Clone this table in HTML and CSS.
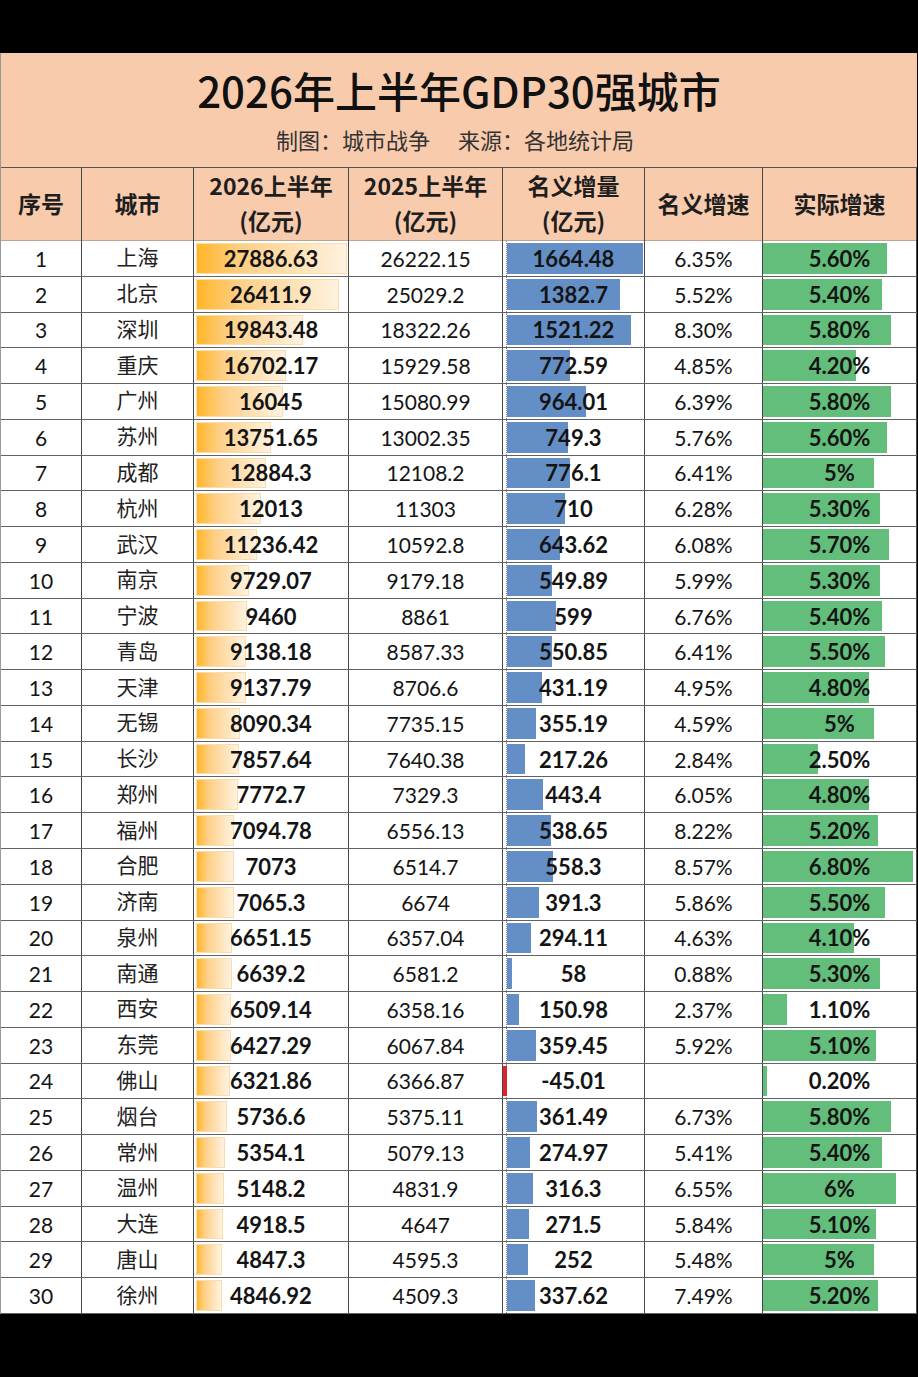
FILE: index.html
```html
<!DOCTYPE html>
<html lang="zh-CN">
<head>
<meta charset="utf-8">
<title>2026年上半年GDP30强城市</title>
<link rel="stylesheet" href="styles.css">
</head>
<body>
<div class="sheet">
  <div class="title-block">
    <div class="title">2026年上半年GDP30强城市</div>
    <div class="subtitle">制图：城市战争<span class="gap"></span>来源：各地统计局</div>
  </div>
  <div class="row head">
    <div class="cell">序号</div>
    <div class="cell">城市</div>
    <div class="cell two">2026上半年<br>(亿元)</div>
    <div class="cell two">2025上半年<br>(亿元)</div>
    <div class="cell two">名义增量<br>(亿元)</div>
    <div class="cell">名义增速</div>
    <div class="cell">实际增速</div>
  </div>
  <div id="rows"></div>
</div>
<script src="script.js"></script>
</body>
</html>
```
FILE: script.js
```js
var data = [
  ["上海","27886.63","26222.15","1664.48","6.35%","5.60%"],
  ["北京","26411.9","25029.2","1382.7","5.52%","5.40%"],
  ["深圳","19843.48","18322.26","1521.22","8.30%","5.80%"],
  ["重庆","16702.17","15929.58","772.59","4.85%","4.20%"],
  ["广州","16045","15080.99","964.01","6.39%","5.80%"],
  ["苏州","13751.65","13002.35","749.3","5.76%","5.60%"],
  ["成都","12884.3","12108.2","776.1","6.41%","5%"],
  ["杭州","12013","11303","710","6.28%","5.30%"],
  ["武汉","11236.42","10592.8","643.62","6.08%","5.70%"],
  ["南京","9729.07","9179.18","549.89","5.99%","5.30%"],
  ["宁波","9460","8861","599","6.76%","5.40%"],
  ["青岛","9138.18","8587.33","550.85","6.41%","5.50%"],
  ["天津","9137.79","8706.6","431.19","4.95%","4.80%"],
  ["无锡","8090.34","7735.15","355.19","4.59%","5%"],
  ["长沙","7857.64","7640.38","217.26","2.84%","2.50%"],
  ["郑州","7772.7","7329.3","443.4","6.05%","4.80%"],
  ["福州","7094.78","6556.13","538.65","8.22%","5.20%"],
  ["合肥","7073","6514.7","558.3","8.57%","6.80%"],
  ["济南","7065.3","6674","391.3","5.86%","5.50%"],
  ["泉州","6651.15","6357.04","294.11","4.63%","4.10%"],
  ["南通","6639.2","6581.2","58","0.88%","5.30%"],
  ["西安","6509.14","6358.16","150.98","2.37%","1.10%"],
  ["东莞","6427.29","6067.84","359.45","5.92%","5.10%"],
  ["佛山","6321.86","6366.87","-45.01","","0.20%"],
  ["烟台","5736.6","5375.11","361.49","6.73%","5.80%"],
  ["常州","5354.1","5079.13","274.97","5.41%","5.40%"],
  ["温州","5148.2","4831.9","316.3","6.55%","6%"],
  ["大连","4918.5","4647","271.5","5.84%","5.10%"],
  ["唐山","4847.3","4595.3","252","5.48%","5%"],
  ["徐州","4846.92","4509.3","337.62","7.49%","5.20%"]
];
var html = "";
for (var i = 0; i < data.length; i++) {
  var d = data[i];
  var gdp = parseFloat(d[1]);
  var inc = parseFloat(d[3]);
  var real = parseFloat(d[5]);
  var ow = (gdp * 151 / 27886.63).toFixed(1);
  var incBar;
  if (inc >= 0) {
    incBar = '<span class="bar blue" style="width:' + (inc * 136 / 1664.48).toFixed(1) + 'px"></span>';
  } else {
    var rw = (-inc * 136 / 1664.48).toFixed(1);
    incBar = '<span class="bar red" style="width:' + rw + 'px;left:' + (4 - rw) + 'px"></span>';
  }
  var gw = (real * 22.1).toFixed(1);
  html += '<div class="row data">' +
    '<div class="cell num">' + (i + 1) + '</div>' +
    '<div class="cell city">' + d[0] + '</div>' +
    '<div class="cell bold"><span class="bar orange" style="width:' + ow + 'px"></span><span class="val">' + d[1] + '</span></div>' +
    '<div class="cell num">' + d[2] + '</div>' +
    '<div class="cell bold inc"><span class="axis"></span>' + incBar + '<span class="val">' + d[3] + '</span></div>' +
    '<div class="cell num">' + d[4] + '</div>' +
    '<div class="cell bold"><span class="bar green" style="width:' + gw + 'px"></span><span class="val">' + d[5] + '</span></div>' +
    '</div>';
}
document.getElementById("rows").innerHTML = html;
```
FILE: styles.css
```css
html, body {
  margin: 0;
  padding: 0;
  background: #000;
}

.sheet {
  width: 916px;
  margin-top: 53px;
  background: #fff;
  border-left: 1px solid #9a9a9a;
  font-family: Lato, "Noto Sans CJK SC", sans-serif;
  color: #141414;
}

.title-block {
  height: 115px;
  box-sizing: border-box;
  background: #f8cbad;
  border-bottom: 1px solid #555;
  display: flex;
  flex-direction: column;
  align-items: center;
}

.title {
  font-family: "Noto Sans CJK SC", sans-serif;
  font-size: 42px;
  line-height: 42px;
  font-weight: 500;
  color: #111;
  margin-top: 16px;
}

.subtitle {
  font-family: "Noto Sans CJK SC", sans-serif;
  font-size: 22px;
  line-height: 22px;
  color: #333;
  margin-top: 17px;
  margin-left: -8px;
}

.gap {
  display: inline-block;
  width: 28px;
}

.row {
  display: grid;
  grid-template-columns: 81px 112px 155px 154px 142px 118px 154px;
  box-sizing: border-box;
}

.row.head {
  height: 73px;
  background: #f8cbad;
  border-bottom: 1px solid #b9a598;
}

.row.data {
  height: 35.77px;
  border-bottom: 1px solid #626262;
}

.cell {
  position: relative;
  box-sizing: border-box;
  border-right: 1px solid #474747;
  display: flex;
  align-items: center;
  justify-content: center;
  text-align: center;
  white-space: nowrap;
}

.head .cell {
  font-family: "Noto Sans CJK SC", sans-serif;
  font-size: 23px;
  line-height: 35px;
  font-weight: 700;
  color: #1e1e1e;
  padding-bottom: 4px;
}

.num {
  font-size: 21px;
  font-weight: 400;
}

.city {
  font-family: "Noto Sans CJK SC", sans-serif;
  font-size: 21px;
  color: #222;
  padding-bottom: 4px;
}

.bold {
  font-size: 22px;
  font-weight: 700;
}

.val {
  position: relative;
  z-index: 1;
}

.bar {
  position: absolute;
  top: 2px;
  bottom: 2px;
  left: 0;
}

.orange {
  left: 2px;
  box-sizing: border-box;
  background: linear-gradient(to right, #ffb628 0%, #fdcf86 30%, #fff2e0 100%);
  border: 1px solid #fbdcab;
}

.inc .blue {
  left: 4px;
  background: #638ec6;
}

.inc .red {
  background: #e0202a;
}

.axis {
  position: absolute;
  top: 0;
  bottom: 0;
  left: 3px;
  border-left: 1px dotted #8a8a8a;
}

.green {
  background: #63be7b;
}
```
